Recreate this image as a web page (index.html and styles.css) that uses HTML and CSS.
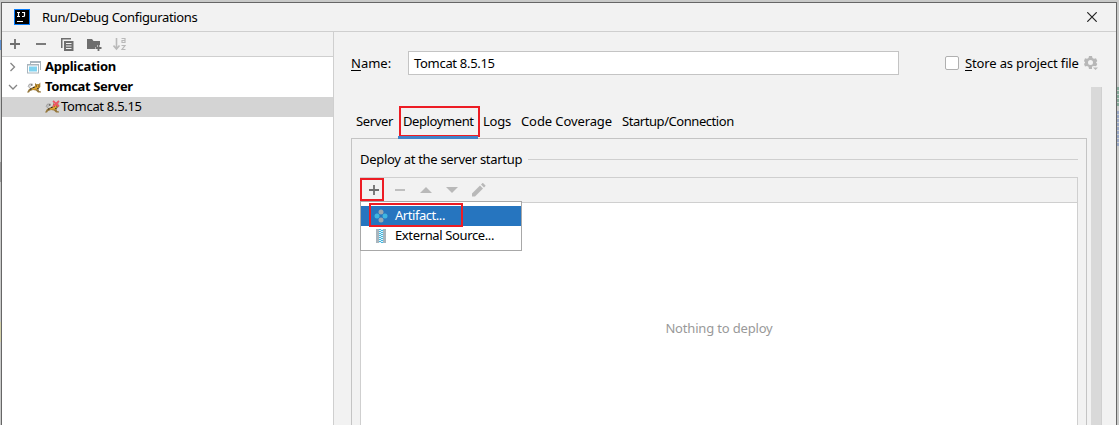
FILE: index.html
```html
<!DOCTYPE html>
<html lang="en">
<head>
<meta charset="utf-8">
<title>Run/Debug Configurations</title>
<link rel="stylesheet" href="styles.css">
</head>
<body>
<svg class="defs" width="0" height="0">
  <symbol id="cat" viewBox="0 0 14 11">
    <path d="M1 4.500L2.500 2h3M1 4.500l2.500 1.500M3 2v3" stroke="#999" stroke-width=".8" fill="none"/>
    <path d="M0 10.500L2 7l4-2 2-1V1l1.500 1.300L12 2l1.300-1.500V5L11.500 7l.5 2 2 .5v1h-3L9 8.500 6 8 3 9l-1 1.500z" fill="#94763a"/>
    <path d="M8.500 2.500l2 .5 2-.7v2.200L10.500 6l.5 1.500H8l-4 .5L6.500 6l2-1z" fill="#e0a52b"/>
    <path d="M9 3.500h1v1H9zM11.300 3.500h1v1h-1zM4 2.500h1.500v1H4zM6 5h1.500v1H6zM3 6.500h1.500v1H3zM10 6h1.500v.8H10z" fill="#2e2b26"/>
  </symbol>
</svg>
<div class="desktop">
  <div class="window">
    <header class="titlebar">
      <svg class="logo" width="16" height="16" viewBox="0 0 16 16">
        <path d="M0 0h16v16H0z" fill="#087cfa"/><path d="M1 1h14v14H1z" fill="#000"/>
        <path d="M3 3.500h3M4.500 3v5M3 7.500h3M8 3.500h3M10.500 3v3.500q0 1-1 1H8M3 12.500h6" stroke="#fff" stroke-width="1.200" fill="none"/>
      </svg>
      <h1 class="title">Run/Debug Configurations</h1>
      <svg class="close" width="10" height="10" viewBox="0 0 10 10"><path d="M.3.3l9.400 9.400M9.700.3L.3 9.700" stroke="#222" stroke-width="1.200"/></svg>
    </header>
    <div class="body">
      <aside class="sidebar">
        <div class="tools">
          <svg width="10" height="10" viewBox="0 0 10 10"><path d="M5 0v10M0 5h10" stroke="#6e6e6e" stroke-width="1.800"/></svg>
          <svg width="10" height="10" viewBox="0 0 10 10"><path d="M0 5h10" stroke="#6e6e6e" stroke-width="1.800"/></svg>
          <svg width="13" height="13" viewBox="0 0 13 13"><path d="M0 0h10v1.500H1.500V10H0z" fill="#6e6e6e"/><path d="M3 3h9.500v10H3z" fill="#6e6e6e"/><path d="M5 5.500h5.500M5 8h5.500M5 10.500h5.500" stroke="#f2f2f2"/></svg>
          <svg width="15" height="13" viewBox="0 0 15 13"><path d="M0 1h5l1.500 2H13v4h-3v2H8v2H0z" fill="#6e6e6e"/><path d="M11.500 7v6M8.500 10h6" stroke="#6e6e6e" stroke-width="1.800"/></svg>
          <svg width="14" height="14" viewBox="0 0 14 14"><path d="M3.500 1v11M.5 8.500l3 3.500 3-3.500" fill="none" stroke="#b9b9b9" stroke-width="1.600"/><path d="M8.500 1.500H12v4H9v-2h3M8.500 8.500H12l-3 4h3.500" fill="none" stroke="#b9b9b9" stroke-width="1.200"/></svg>
        </div>
        <div class="tree">
          <div class="row">
            <svg class="arrow" width="10" height="10" viewBox="0 0 10 10"><path d="M2.500 1l4 4-4 4" fill="none" stroke="#858585" stroke-width="1.300"/></svg>
            <svg class="type" width="15" height="14" viewBox="0 0 15 14"><path d="M3 1h11v9h-1V3H4v1H3z" fill="#a9b5bd"/><path d="M0 4h12v9.500H0z" fill="#a9b5bd"/><path d="M1 5.500h10v7H1z" fill="#fff"/><path d="M2 6.500h8v5H2z" fill="#80d3f0"/></svg>
            <b class="label app-label">Application</b>
          </div>
          <div class="row">
            <svg class="arrow" width="10" height="10" viewBox="0 0 10 10"><path d="M1 3l4 4 4-4" fill="none" stroke="#858585" stroke-width="1.300"/></svg>
            <svg class="type" width="15" height="11" viewBox="0 0 15 11"><use href="#cat" width="14" height="11"/></svg>
            <b class="label server-label">Tomcat Server</b>
          </div>
          <div class="row selected">
            <svg class="type" width="15" height="14" viewBox="0 0 15 14"><use href="#cat" y="2" width="14" height="11"/><path d="M8 1l6 5.500M14 1L8 6.500" stroke="#ed5565" stroke-width="1.700"/></svg>
            <span class="label config-label">Tomcat 8.5.15</span>
          </div>
        </div>
      </aside>
      <main class="editor">
        <div class="name-row">
          <label class="name-label"><u>N</u>ame:</label>
          <div class="field"><span class="config-label">Tomcat 8.5.15</span></div>
          <div class="store"><i class="box"></i><span class="store-label"><u>S</u>tore as project file</span>
            <svg width="14" height="15" viewBox="0 0 14 15"><path d="M5 0h3l.5 2 1.500.8 2-.6L13.300 5 12 6.500 13.300 8 12 10.500l-2-.5-1.500.8L8 13H5l-.5-2.200L3 10l-2 .5L0 8l1.200-1.500L0 5l1-2.800L3 2.800 4.500 2zM6.500 4a2.500 2.500 0 100 5 2.500 2.500 0 000-5z" fill="#b7b7b7" fill-rule="evenodd"/><path d="M8 10.500h6v2l-3 3-3-3z" fill="#f2f2f2"/><path d="M9 11.500h5L11.500 14z" fill="#b7b7b7"/></svg>
          </div>
        </div>
        <div class="scroll-area">
          <div class="tabbed">
            <nav class="tabs">
              <span class="tab t-server">Server</span>
              <span class="tab t-deploy active">Deployment</span>
              <span class="tab t-logs">Logs</span>
              <span class="tab t-cover">Code Coverage</span>
              <span class="tab t-start">Startup/Connection</span>
            </nav>
            <section class="panel">
              <div class="legend"><span class="legend-text">Deploy at the server startup</span><i class="rule"></i></div>
              <div class="list">
                <div class="actions">
                  <svg width="12" height="12" viewBox="0 0 12 12"><path d="M6 1v10M1 6h10" stroke="#6e6e6e" stroke-width="1.800"/></svg>
                  <svg width="12" height="12" viewBox="0 0 12 12"><path d="M1 6h10" stroke="#b9b9b9" stroke-width="1.800"/></svg>
                  <svg width="12" height="12" viewBox="0 0 12 12"><path d="M0 9l6-6 6 6z" fill="#b9b9b9"/></svg>
                  <svg width="12" height="12" viewBox="0 0 12 12"><path d="M0 3h12L6 9z" fill="#b9b9b9"/></svg>
                  <svg width="14" height="14" viewBox="0 0 14 14"><path d="M0 13.500V10.500l8-8L11 5.500l-8 8zM9 1.500L10.500 0h.5l2.500 2.500V3L12 4.500z" fill="#b9b9b9"/></svg>
                </div>
                <div class="empty"><span class="empty-text">Nothing to deploy</span></div>
                <div class="menu">
                  <div class="item chosen"><svg width="14" height="14" viewBox="0 0 14 14"><circle cx="7" cy="3" r="2.500" fill="#9aa7b0"/><circle cx="7" cy="11" r="2.500" fill="#9aa7b0"/><circle cx="3" cy="7" r="2.500" fill="#40b6e0"/><circle cx="11" cy="7" r="2.500" fill="#40b6e0"/></svg><span class="label artifact">Artifact...</span></div>
                  <div class="item"><svg width="14" height="14" viewBox="0 0 14 14"><path d="M2 0h3v14H2zM9 0h3v14H9z" fill="#a9b5bd"/><path d="M5 0h4v14H5z" fill="#e2f5fc"/><path d="M6 0v14" stroke="#40b6e0" stroke-width="2" stroke-dasharray="1 1"/><path d="M8 1v13" stroke="#40b6e0" stroke-width="2" stroke-dasharray="1 1"/></svg><span class="label external">External Source...</span></div>
                </div>
              </div>
            </section>
          </div>
          <div class="scrollbar"></div>
        </div>
      </main>
    </div>
  </div>
  <i class="mark mark-tab"></i><i class="mark mark-add"></i><i class="mark mark-item"></i>
  <div class="edge"><i class="green"></i><i class="blue"></i></div>
  <div class="left-edge"><i class="accent"></i><i class="shade"></i><i class="cream"></i></div>
</div>
</body>
</html>
```
FILE: styles.css
```css
* { box-sizing: border-box; }
body { margin: 0; overflow: hidden; font: 13px/20px "Noto Sans", "Open Sans", sans-serif; color: #000; }
svg { display: block; flex: none; }
span, b, h1, label { white-space: nowrap; }
.defs { position: absolute; }
.desktop { position: relative; width: 1119px; height: 425px; padding: 2px 2px 0 1px; background: #c9cac9; overflow: hidden; }
.window { height: 424px; border: 1px solid #666; background: #f2f2f2; display: flex; flex-direction: column; }
.titlebar { height: 29px; flex: none; border-bottom: 1px solid #cfcfcf; display: flex; align-items: center; padding: 0 19px 0 12px; }
.title { margin: 0 0 1px 12px; font-size: 13px; font-weight: 400; letter-spacing: -.35px; }
.close { margin-left: auto; }
.body { flex: 1; display: flex; min-height: 0; }
.sidebar { width: 332px; flex: none; border-right: 1px solid #cfcfcf; background: #fff; }
.tools { height: 25px; background: #f2f2f2; border-bottom: 1px solid #cfcfcf; display: flex; align-items: center; gap: 16px; padding-left: 8px; }
.tools svg:nth-child(3) { margin-left: -1px; }
.tools svg:nth-child(4) { margin-left: -3px; }
.tools svg:nth-child(5) { margin-left: -5px; }
.row { height: 20px; display: flex; align-items: center; padding-left: 6px; }
.arrow { margin: 0 9px 1px 0; }
.type { margin-right: 3px; }
.label { margin-bottom: 2px; }
.app-label { letter-spacing: -.25px; }
.server-label { letter-spacing: -.38px; }
.config-label { letter-spacing: -.3px; }
.row.selected { background: #d4d4d4; padding-left: 43px; }
.row.selected .type { margin-right: 1px; }
.editor { flex: 1; min-width: 0; }
.name-row { height: 55px; padding: 19px 18px 0 17px; display: flex; align-items: flex-start; }
.name-label { width: 57px; line-height: 24px; }
u { text-underline-offset: 2px; }
.field { width: 491px; height: 24px; border: 1px solid #c4c4c4; background: #fff; padding-left: 5px; line-height: 22px; }
.store { margin-left: auto; height: 24px; display: flex; align-items: center; }
.box { width: 14px; height: 14px; border: 1px solid #b0b0b0; border-radius: 2px; background: #fff; margin-right: 6px; }
.store-label { width: 114px; margin-right: 5px; letter-spacing: -.15px; }
.scroll-area { height: 338px; display: flex; padding-left: 17px; }
.tabbed { width: 736px; display: flex; flex-direction: column; }
.tabs { position: relative; z-index: 1; height: 51px; flex: none; padding-top: 21px; display: flex; }
.tab { height: 30px; line-height: 27px; padding-left: 5px; }
.t-server { width: 47px; letter-spacing: -.35px; }
.t-deploy { width: 80px; letter-spacing: -.4px; }
.t-logs { width: 38px; letter-spacing: -.2px; }
.t-cover { width: 101px; letter-spacing: -.1px; }
.t-start { letter-spacing: -.44px; }
.tab.active { border-bottom: 3px solid #4083c9; height: 31px; }
.panel { flex: 1; border: 1px solid #c4c4c4; border-bottom: 0; padding: 10px 8px 0; display: flex; flex-direction: column; }
.legend { height: 20px; display: flex; align-items: center; }
.legend-text { width: 168px; letter-spacing: -.3px; }
.rule { flex: 1; height: 1px; background: #cfcfcf; }
.list { position: relative; flex: 1; margin-top: 8px; border: 1px solid #cfcfcf; border-bottom: 0; background: #fff; }
.actions { height: 25px; background: #f2f2f2; border-bottom: 1px solid #cfcfcf; display: flex; align-items: center; gap: 14px; padding-left: 7px; }
.empty { height: 250px; text-align: center; line-height: 250px; color: #999; }
.empty-text { letter-spacing: -.17px; }
.menu { position: absolute; left: -1px; top: 23px; width: 162px; height: 50px; border: 1px solid #a8a8a8; background: #fff; padding-top: 4px; }
.item { height: 20px; display: flex; align-items: center; gap: 7px; padding-left: 13px; }
.item.chosen { background: #2675bf; color: #fff; }
.artifact { letter-spacing: -.45px; }
.external { letter-spacing: -.37px; }
.scrollbar { width: 11px; margin-left: 4px; background: #d9d9d9; border-right: 1px solid #d0d0d0; }
.mark { position: absolute; border: 2px solid #ed1c24; }
.mark-tab { left: 399px; top: 106px; width: 81px; height: 31px; }
.mark-add { left: 360px; top: 178px; width: 24px; height: 23px; }
.mark-item { left: 369px; top: 203px; width: 94px; height: 24px; }
.edge { position: absolute; right: 0; top: 0; width: 2px; height: 425px; display: flex; flex-direction: column; padding-top: 87px; }
.green { height: 20px; background: repeating-linear-gradient(#85a898 0 3px, #c9cac9 3px 4px); }
.blue { margin-top: 4px; height: 36px; background: repeating-linear-gradient(#98a6c4 0 3px, #c9cac9 3px 4px); }
.left-edge { position: absolute; left: 0; top: 0; width: 1px; height: 425px; padding-top: 40px; }
.left-edge i { display: block; }
.accent { height: 10px; background: #5f92d3; }
.shade { height: 20px; margin-top: 112px; background: #999; }
.cream { height: 20px; margin-top: 140px; background: #d3d0a8; }
```
